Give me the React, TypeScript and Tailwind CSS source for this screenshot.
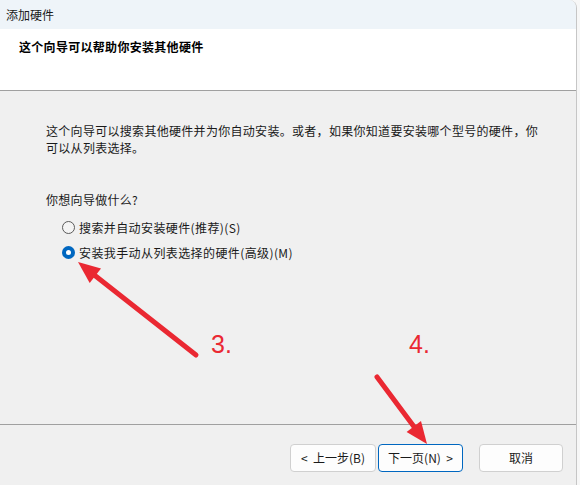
import React from "react";

const font = { fontFamily: '"Noto Sans CJK SC", "Noto Sans", sans-serif' };

function Radio({ checked, label }: { checked: boolean; label: string }) {
  return (
    <div className="flex items-center h-[17px]">
      {checked ? (
        <span className="w-[13px] h-[13px] rounded-full bg-[#0067c0] flex items-center justify-center shrink-0">
          <span className="w-[5px] h-[5px] rounded-full bg-white" />
        </span>
      ) : (
        <span className="w-[13px] h-[13px] rounded-full border border-[#5a5a5a] bg-[#f4f4f4] shrink-0" />
      )}
      <span className="ml-[4px] text-[12px] tracking-[0.4px] text-[#1a1a1a] leading-[17px]">{label}</span>
    </div>
  );
}

function Btn({ children, primary, w }: { children: React.ReactNode; primary?: boolean; w: string }) {
  return (
    <div
      className={
        "h-[28px] rounded-[4px] bg-[#fdfdfd] flex items-center justify-center text-[12px] text-[#1a1a1a] border whitespace-pre " +
        (primary ? "border-[#0067c0]" : "border-[#d0d0d0]") +
        " " +
        w
      }
    >
      {children}
    </div>
  );
}

export default function App() {
  return (
    <div className="relative w-[580px] h-[485px] overflow-hidden bg-[#f7f7f7] flex" style={font}>
      <div className="w-[577px] h-full flex flex-col border-r border-[#c6c6c6] rounded-tr-[8px] overflow-hidden">
        <div className="h-[29px] bg-[#eef4f9] pl-[6px] flex items-center text-[12px] text-[#1a1a1a] shrink-0">
          添加硬件
        </div>
        <div className="h-[62px] bg-white border-b border-[#a0a0a0] pl-[19px] pt-[9px] shrink-0">
          <div className="text-[12px] font-bold text-black leading-[17px] tracking-[0.3px]">这个向导可以帮助你安装其他硬件</div>
        </div>
        <div className="h-[334px] bg-[#f0f0f0] border-b border-[#a0a0a0] pl-[46px] pt-[31px] shrink-0">
          <div className="text-[12px] leading-[17px] text-[#1a1a1a] w-[500px] tracking-[0.3px]">
            这个向导可以搜索其他硬件并为你自动安装。或者，如果你知道要安装哪个型号的硬件，你
            <br />
            可以从列表选择。
          </div>
          <div className="mt-[35px] text-[12px] leading-[17px] text-[#1a1a1a] tracking-[0.3px]">你想向导做什么?</div>
          <div className="mt-[11px] ml-[16px] flex flex-col gap-[8px]">
            <Radio checked={false} label="搜索并自动安装硬件(推荐)(S)" />
            <Radio checked={true} label="安装我手动从列表选择的硬件(高级)(M)" />
          </div>
        </div>
        <div className="flex-1 bg-[#f0f0f0] flex pt-[19px] pl-[290px]">
          <Btn w="w-[86px]">{"<  上一步(B)"}</Btn>
          <div className="w-[2px]" />
          <Btn w="w-[85px]" primary>
            {"下一页(N)  >"}
          </Btn>
          <div className="w-[16px]" />
          <Btn w="w-[84px]">取消</Btn>
        </div>
      </div>

      <svg className="absolute left-0 top-0 pointer-events-none" width="580" height="485" viewBox="0 0 580 485">
        <line x1="196" y1="355" x2="93" y2="274" stroke="#ea2832" strokeWidth="5" strokeLinecap="round" />
        <polygon points="78,262 101,268.5 89.7,283" fill="#ea2832" />
        <line x1="377" y1="377" x2="415" y2="428" stroke="#ea2832" strokeWidth="5" strokeLinecap="round" />
        <polygon points="427,444 421,421 406.6,432" fill="#ea2832" />
      </svg>
      <div
        className="absolute left-[211px] top-[327px] text-[25px] leading-[34px] text-[#ea2832]"
        style={{ fontFamily: '"Liberation Sans", "Noto Sans", sans-serif' }}
      >
        3.
      </div>
      <div
        className="absolute left-[409px] top-[327px] text-[25px] leading-[34px] text-[#ea2832]"
        style={{ fontFamily: '"Liberation Sans", "Noto Sans", sans-serif' }}
      >
        4.
      </div>
    </div>
  );
}
